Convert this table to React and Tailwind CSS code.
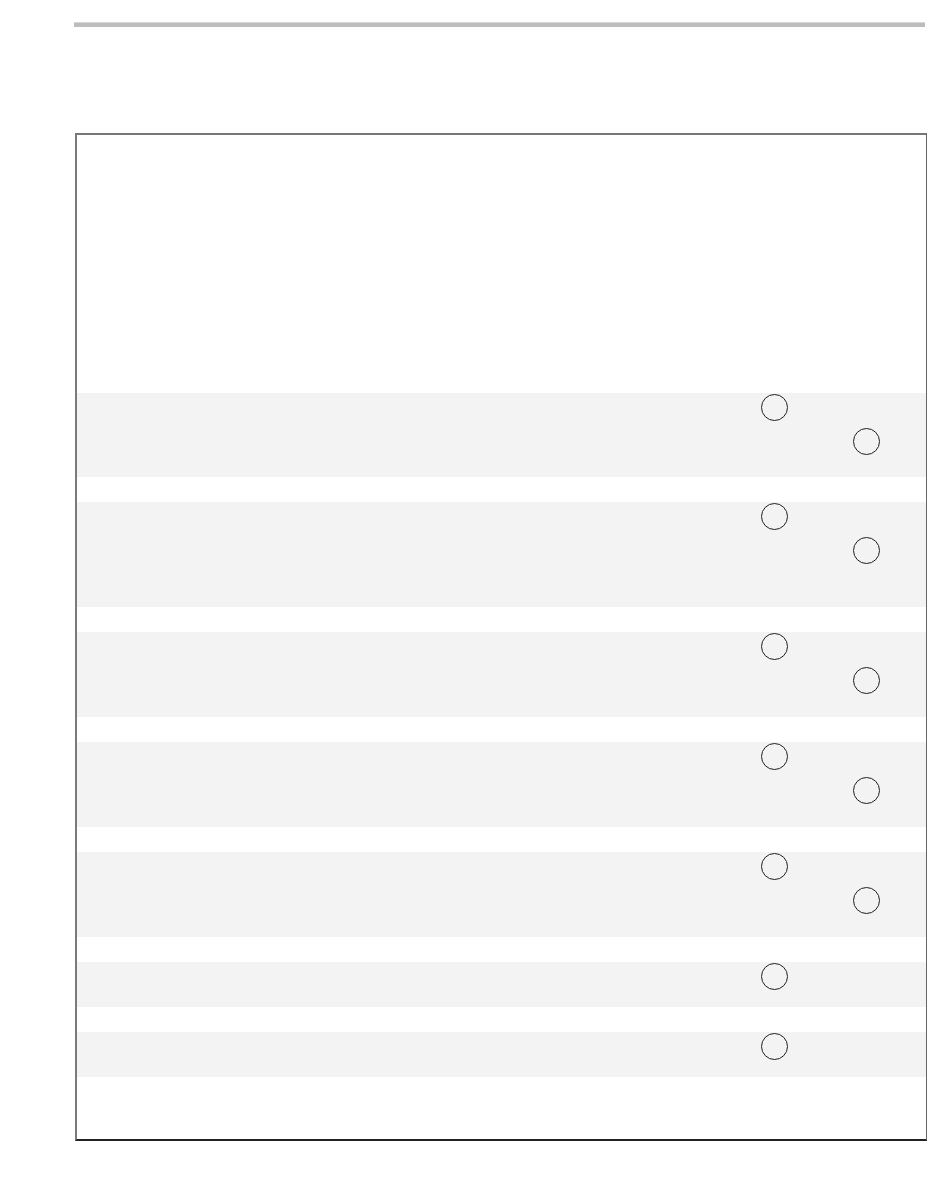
import React from "react";

const rows = [
  { h: "h-[84px]", two: true },
  { h: "h-[105px]", two: true },
  { h: "h-[85px]", two: true },
  { h: "h-[85px]", two: true },
  { h: "h-[85px]", two: true },
  { h: "h-[45px]", two: false },
  { h: "h-[45px]", two: false },
];

function Radio() {
  return <span className="block w-[27px] h-[27px] rounded-full border-[1.5px] border-[#1f1f1f] bg-transparent" />;
}

export default function App() {
  return (
    <div className="min-h-[1201px] bg-white font-['Liberation_Sans',sans-serif]">
      <div className="ml-[74px] w-[851px] pt-[22px]">
        {/* header rule */}
        <div className="h-[5px] bg-[#bdbdbd] border-t border-t-[#d6d6d6]" />
      </div>

      {/* form frame */}
      <div className="ml-[75px] mt-[106px] w-[852px] h-[1008px] border-t-2 border-t-[#777] border-l-2 border-l-[#7a7a7a] border-r border-r-[#666] border-b-2 border-b-[#222]">
        <div className="pt-[258px] flex flex-col gap-[25px]">
          {rows.map((r, i) => (
            <div key={i} className={`${r.h} bg-[#f3f3f3] grid grid-cols-[684px_92px_1fr]`}>
              <div />
              <div className="pt-[1px]">
                <Radio />
              </div>
              <div className="pt-[35px]">{r.two && <Radio />}</div>
            </div>
          ))}
        </div>
      </div>
    </div>
  );
}
